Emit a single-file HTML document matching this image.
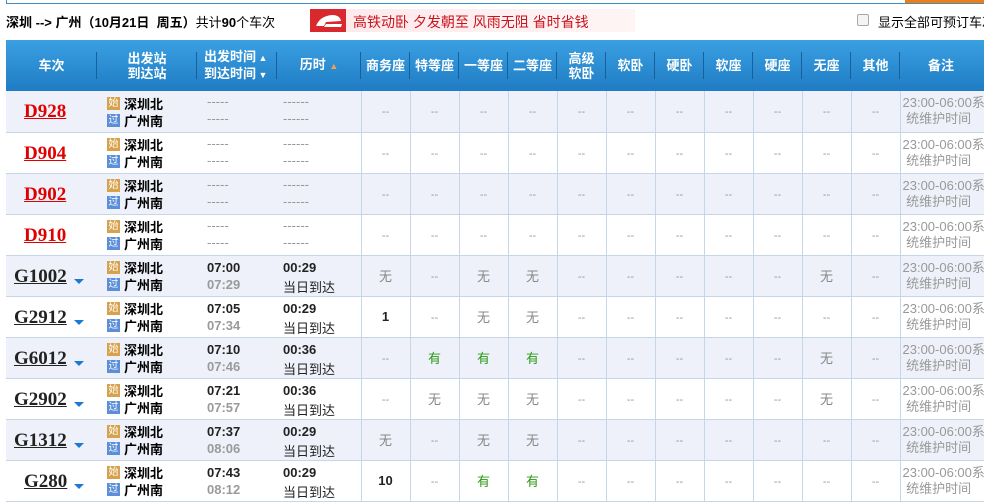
<!DOCTYPE html>
<html><head><meta charset="utf-8"><style>
*{margin:0;padding:0;box-sizing:border-box}
body{width:984px;height:498px;overflow:hidden;background:#fff;font-family:"Liberation Sans","Noto Sans CJK SC",sans-serif;font-size:13px;color:#333;position:relative}
.topline{position:absolute;left:6px;top:0;width:990px;height:4px;border-left:1px solid #3c8fc5;border-bottom:1px solid #3c8fc5}
.orange{position:absolute;left:905px;top:0;width:79px;height:3px;background:#f07c12}
.title{position:absolute;left:6px;top:12px;font-size:13px;color:#000;white-space:nowrap}
.title b{font-weight:bold}
.ad{position:absolute;left:310px;top:9px;width:325px;height:23px;background:linear-gradient(90deg,#fde8ea,#fff5f5)}
.ad .logo{position:absolute;left:0;top:0;width:36px;height:23px;background:#d9282e}
.ad span{position:absolute;left:43px;top:3px;color:#c8141e;font-size:14px}
.chk{position:absolute;left:857px;top:14px;width:12px;height:12px;border:1px solid #aaa;border-radius:2px;background:#f4f4f4}
.chkt{position:absolute;left:878px;top:12px;font-size:13px;color:#000;white-space:nowrap}
table{position:absolute;left:6px;top:40px;border-collapse:collapse;table-layout:fixed;width:984px}
thead th{height:51px;background:linear-gradient(#3aa0e2,#1f7cc4);color:#fff;font-weight:bold;font-size:13px;line-height:15px;position:relative;padding:0}
thead th:after{content:"";position:absolute;right:0;top:12px;height:27px;width:1px;background:#1a5f9a}
thead th:last-child:after{display:none}
tbody td{height:41px;border-bottom:1px solid #c6d6e6;text-align:center;padding:0;color:#888;font-size:12px;position:relative}
tbody td.s{border-left:1px solid #c6d6e6}
tbody tr.o td{background:#eef1f9}
.tn{font-family:"Liberation Serif",serif;font-weight:bold;font-size:19px;color:#222;text-decoration:underline;position:absolute;left:8px;top:10px;white-space:nowrap}
.tn.r{color:#e10000;left:18px}
.dd{position:absolute;left:68px;top:23px;width:0;height:0;border-left:5px solid transparent;border-right:5px solid transparent;border-top:5px solid #1a7ad0}
.st{position:absolute;left:10px;color:#000;font-weight:bold;font-size:13px;white-space:nowrap;display:flex;align-items:center;height:16px}
.ic{display:flex;align-items:center;justify-content:center;width:13px;height:13px;color:#fff;font-size:10px;line-height:13px;font-weight:normal;margin-right:4px}
.i1{background:#d6a24c}.i2{background:#5c8fd8}
.tm{position:absolute;left:10px;text-align:left;font-weight:bold;font-size:13px;color:#222}
.tm.g{color:#9a9a9a}
.ds{position:absolute;left:6px;text-align:left;color:#222;font-size:13px}
.dash{color:#999;font-size:11px}
.y{color:#2a9a12;font-size:13px}
.n{color:#222;font-weight:bold;font-size:13px}
.w{color:#888;font-size:13px}
.bz{color:#999;font-size:13px;line-height:16px;text-align:left;padding-left:2px;white-space:nowrap;overflow:hidden}
</style></head><body>
<div class="topline"></div><div class="orange"></div>
<div class="title"><b>深圳 --&gt; 广州（10月21日&nbsp; 周五）</b>共计<b>90</b>个车次</div>
<div class="ad"><div class="logo"><svg width="36" height="23"><path d="M6 17 Q10 7 22 6 Q30 6 31 12 L16 13 L14 17 Z" fill="#fff"/><path d="M16 15 L32 15 L31 18 L14 18Z" fill="#fff"/></svg></div><span>高铁动卧 夕发朝至 风雨无阻 省时省钱</span></div>
<div class="chk"></div><div class="chkt">显示全部可预订车次</div>
<table>
<colgroup><col style="width:91px"><col style="width:100px"><col style="width:80px"><col style="width:84px"><col span="11" style="width:49px"><col style="width:90px"></colgroup>
<thead><tr><th>车次</th><th>出发站<br>到达站</th><th style="text-align:left;padding-left:7px">出发时间<span style="font-size:9px"> ▲</span><br>到达时间<span style="font-size:9px"> ▼</span></th><th>历时 <span style="color:#f0a050;font-size:9px">▲</span></th><th>商务座</th><th>特等座</th><th>一等座</th><th>二等座</th><th>高级<br>软卧</th><th>软卧</th><th>硬卧</th><th>软座</th><th>硬座</th><th>无座</th><th>其他</th><th style="text-align:left;padding-left:28px">备注</th></tr></thead>
<tbody id="b"></tbody></table>
<script>
var R=[
["D928",1],["D904",1],["D902",1],["D910",1],
["G1002",0,"07:00","07:29","00:29",["无","--","无","无","--","--","--","--","--","无","--"]],
["G2912",0,"07:05","07:34","00:29",["1","--","无","无","--","--","--","--","--","--","--"]],
["G6012",0,"07:10","07:46","00:36",["--","有","有","有","--","--","--","--","--","无","--"]],
["G2902",0,"07:21","07:57","00:36",["--","无","无","无","--","--","--","--","--","无","--"]],
["G1312",0,"07:37","08:06","00:29",["无","--","无","无","--","--","--","--","--","--","--"]],
["G280",0,"07:43","08:12","00:29",["10","--","有","有","--","--","--","--","--","--","--"]]];
var h="";
R.forEach(function(r,i){
 h+='<tr class="'+(i%2==0?'o':'')+'">';
 var tl=r[0].length==4&&!r[1]?'style="left:18px"':'';
 h+='<td><span class="tn'+(r[1]?' r':'')+'" '+tl+'>'+r[0]+'</span>'+(r[1]?'':'<span class="dd"></span>')+'</td>';
 h+='<td><div class="st" style="top:4px"><span class="ic i1">始</span>深圳北</div><div class="st" style="top:21px"><span class="ic i2">过</span>广州南</div></td>';
 if(r[1]){
  h+='<td><div class="tm g" style="top:3px;font-weight:normal">-----</div><div class="tm g" style="top:20px;font-weight:normal">-----</div></td>';
  h+='<td><div class="ds" style="top:3px;color:#999">------</div><div class="ds" style="top:20px;color:#999">------</div></td>';
 }else{
  h+='<td><div class="tm" style="top:4px">'+r[2]+'</div><div class="tm g" style="top:21px">'+r[3]+'</div></td>';
  h+='<td><div class="ds" style="top:4px;font-weight:bold">'+r[4]+'</div><div class="ds" style="top:21px">当日到达</div></td>';
 }
 var s=r[1]?["--","--","--","--","--","--","--","--","--","--","--"]:r[5];
 s.forEach(function(v){
  var c=v=="--"?'<span class="dash">--</span>':v=="有"?'<span class="y">有</span>':v=="无"?'<span class="w">无</span>':'<span class="n">'+v+'</span>';
  h+='<td class="s">'+c+'</td>';
 });
 h+='<td class="s bz">23:00-06:00系<br>&nbsp;统维护时间</td></tr>';
});
document.getElementById("b").innerHTML=h;
</script>
</body></html>
